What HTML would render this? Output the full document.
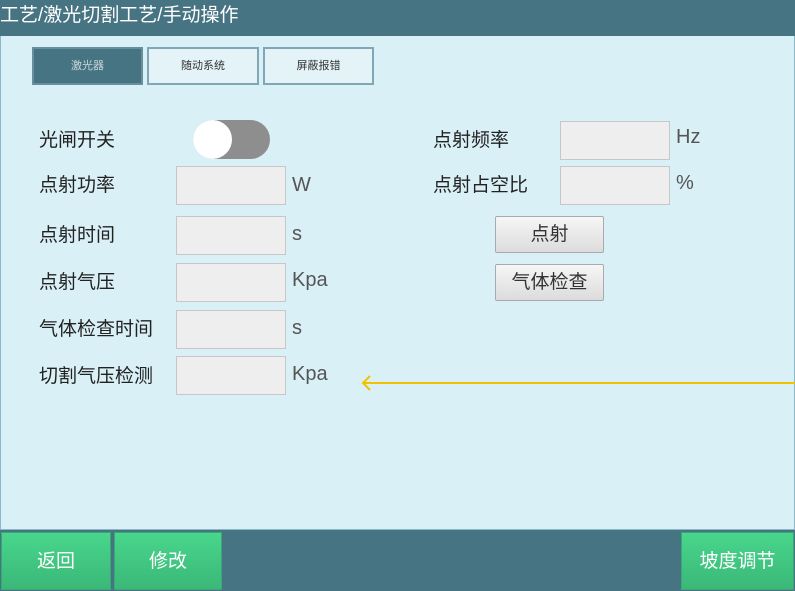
<!DOCTYPE html><html><head><meta charset="utf-8"><style>
*{margin:0;padding:0;box-sizing:border-box}
body{width:795px;height:591px;position:relative;overflow:hidden;background:#daf0f7;font-family:"Liberation Sans","Noto Sans CJK SC",sans-serif;color:#222}
.a{position:absolute}
.hdr{left:0;top:0;width:795px;height:36px;background:#477483;color:#fff;font-size:19px;line-height:32px}
.main{left:0;top:36px;width:795px;height:494px;border:1px solid #8ab8c6;border-top:none}
.tab{height:38px;top:47px;border:2px solid #7fa7b5;font-size:11px;text-align:center;line-height:34px;background:#e4f3f8;color:#333}
.lbl{font-size:19px;line-height:20px}
.inp{background:#eeeeee;border:1px solid #c7c7c7;width:110px;height:39px}
.u{font-size:20px;color:#555}
.btn{width:109px;height:37px;border:1px solid #aaa;border-radius:2px;background:linear-gradient(#f6f6f6,#dcdcdc);font-size:19px;text-align:center;line-height:35px;color:#333}
.bar{left:0;top:530px;width:795px;height:61px;background:#477483}
.g{top:532px;height:58px;background:linear-gradient(#48d68c,#3bb878);color:#fff;font-size:19px;text-align:center;line-height:58px;border:1px solid #3aa872}
</style></head><body>
<div class="a hdr">工艺/激光切割工艺/手动操作</div>
<div class="a main"></div>
<div class="a tab" style="left:32px;width:111px;background:#477483;border-color:#6a8f9c;color:#c8d8dc">激光器</div>
<div class="a tab" style="left:147px;width:112px">随动系统</div>
<div class="a tab" style="left:263px;width:111px">屏蔽报错</div>

<div class="a lbl" style="left:39px;top:131px">光闸开关</div>
<div class="a" style="left:193px;top:120px;width:77px;height:39px;border-radius:20px;background:#8e8e8e"></div>
<div class="a" style="left:193px;top:120px;width:39px;height:39px;border-radius:50%;background:#fff"></div>

<div class="a lbl" style="left:39px;top:176px">点射功率</div>
<div class="a inp" style="left:176px;top:166px"></div><div class="a u" style="left:292px;top:174px">W</div>
<div class="a lbl" style="left:39px;top:226px">点射时间</div>
<div class="a inp" style="left:176px;top:216px"></div><div class="a u" style="left:292px;top:223px">s</div>
<div class="a lbl" style="left:39px;top:273px">点射气压</div>
<div class="a inp" style="left:176px;top:263px"></div><div class="a u" style="left:292px;top:269px">Kpa</div>
<div class="a lbl" style="left:39px;top:320px">气体检查时间</div>
<div class="a inp" style="left:176px;top:310px"></div><div class="a u" style="left:292px;top:317px">s</div>
<div class="a lbl" style="left:39px;top:367px">切割气压检测</div>
<div class="a inp" style="left:176px;top:356px"></div><div class="a u" style="left:292px;top:363px">Kpa</div>

<div class="a lbl" style="left:433px;top:131px">点射频率</div>
<div class="a inp" style="left:560px;top:121px"></div><div class="a u" style="left:676px;top:126px">Hz</div>
<div class="a lbl" style="left:433px;top:176px">点射占空比</div>
<div class="a inp" style="left:560px;top:166px"></div><div class="a u" style="left:676px;top:172px">%</div>
<div class="a btn" style="left:495px;top:216px">点射</div>
<div class="a btn" style="left:495px;top:264px">气体检查</div>

<svg class="a" style="left:355px;top:374px" width="440" height="18"><line x1="8" y1="9" x2="440" y2="9" stroke="#f2c200" stroke-width="2"/><polyline points="15,2 8,9 15,16" fill="none" stroke="#f2c200" stroke-width="2"/></svg>

<div class="a bar"></div>
<div class="a g" style="left:1px;width:110px">返回</div>
<div class="a g" style="left:114px;width:108px">修改</div>
<div class="a g" style="left:681px;width:113px">坡度调节</div>
</body></html>
